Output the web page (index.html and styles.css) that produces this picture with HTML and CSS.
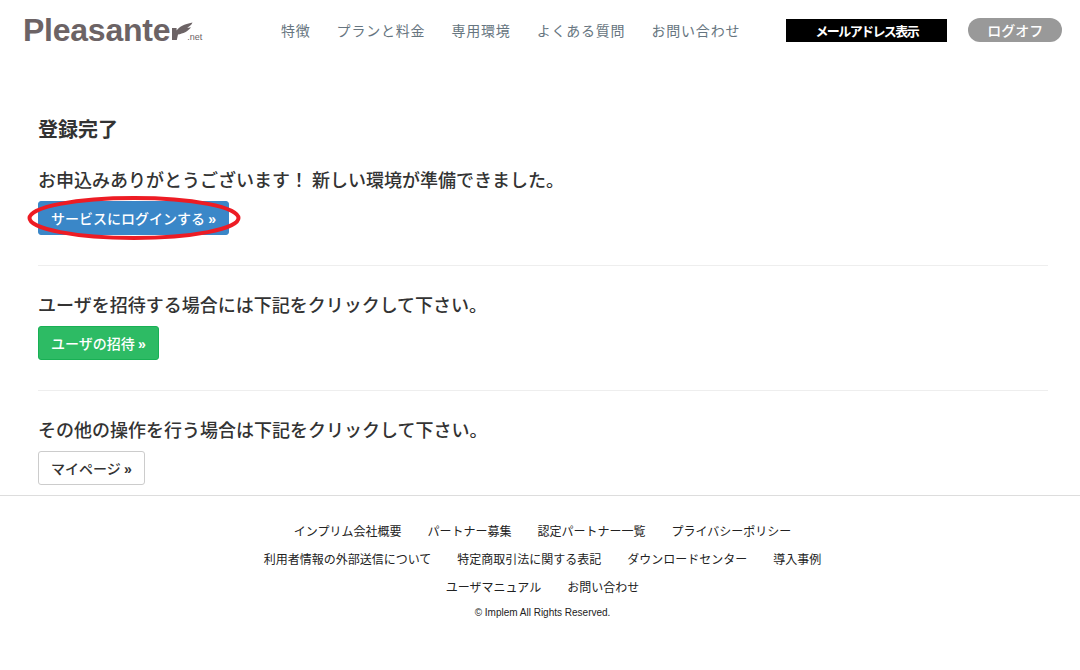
FILE: index.html
```html
<!DOCTYPE html>
<html lang="ja">
<head>
<meta charset="utf-8">
<title>登録完了</title>
<link rel="stylesheet" href="styles.css">
</head>
<body>
<header class="site-header">
  <a class="logo"><span class="logo-name">Pleasante</span><svg class="logo-feather" width="22" height="19" viewBox="0 0 22 19"><path d="M1 18V6h4.600v2.400C8 5 13 2 21.500 .5 20.500 3 18.500 4.500 16 5.600 18 5.800 19 5.600 20 5.200 17 9.500 12 11.500 7 12.500L5.800 18H1Z" fill="#6c6365"/></svg><span class="logo-net">.net</span></a>
  <nav class="nav">
    <a>特徴</a><a>プランと料金</a><a>専用環境</a><a>よくある質問</a><a>お問い合わせ</a>
  </nav>
  <div class="mail">メールアドレス表示</div>
  <div class="logoff">ログオフ</div>
</header>
<main class="content">
  <h1 class="title">登録完了</h1>
  <section class="block">
    <p class="lead">お申込みありがとうございます！ 新しい環境が準備できました。</p>
    <div class="marked">
      <a class="btn btn-blue">サービスにログインする <b class="arrow">»</b></a>
      <svg class="circle" width="214" height="46" viewBox="0 0 214 46"><ellipse cx="107" cy="23" rx="104.500" ry="20" fill="none" stroke="#ed1c24" stroke-width="4"/></svg>
    </div>
  </section>
  <hr class="rule">
  <section class="block">
    <p class="lead">ユーザを招待する場合には下記をクリックして下さい。</p>
    <a class="btn btn-green">ユーザの招待 <b class="arrow">»</b></a>
  </section>
  <hr class="rule">
  <section class="block">
    <p class="lead">その他の操作を行う場合は下記をクリックして下さい。</p>
    <a class="btn btn-white">マイページ <b class="arrow">»</b></a>
  </section>
</main>
<footer class="footer">
  <div class="links"><a>インプリム会社概要</a><a>パートナー募集</a><a>認定パートナー一覧</a><a>プライバシーポリシー</a></div>
  <div class="links"><a>利用者情報の外部送信について</a><a>特定商取引法に関する表記</a><a>ダウンロードセンター</a><a>導入事例</a></div>
  <div class="links"><a>ユーザマニュアル</a><a>お問い合わせ</a></div>
  <p class="copy">© Implem All Rights Reserved.</p>
</footer>
</body>
</html>
```
FILE: styles.css
```css
* { box-sizing: border-box; }
html, body { margin: 0; padding: 0; }
body {
  width: 1080px;
  height: 670px;
  overflow: hidden;
  background: #fff;
  color: #333;
  font-family: "Noto Sans CJK JP", "Liberation Sans", sans-serif;
}
.site-header {
  display: flex;
  align-items: center;
  height: 60px;
  padding: 0 17px 0 23px;
}
.logo {
  display: flex;
  align-items: flex-end;
  width: 181px;
  height: 32px;
  color: #6c6365;
}
.logo-name {
  font: bold 32px/32px "Liberation Sans", sans-serif;
  letter-spacing: -0.25px;
}
.logo-feather { margin: 0 0 5px 1px; }
.logo-net {
  font: 9px/10px "Liberation Sans", sans-serif;
  margin: 0 0 4px -6px;
}
.nav {
  display: flex;
  gap: 26px;
  margin-left: 77px;
  font-size: 14px;
  letter-spacing: 0.8px;
  color: #667580;
}
.mail {
  width: 161px;
  height: 23px;
  margin-left: 46px;
  background: #000;
  color: #fff;
  font-size: 13px;
  font-weight: 700;
  line-height: 23px;
  letter-spacing: -1.6px;
  text-align: center;
}
.logoff {
  width: 94px;
  height: 24px;
  margin-left: 21px;
  border-radius: 12px;
  background: #999;
  color: #fff;
  font-size: 14px;
  font-weight: 500;
  line-height: 24px;
  text-align: center;
}
.content { padding: 55px 32px 0 38px; }
.title {
  margin: 0 0 22px;
  font-size: 20px;
  font-weight: 700;
  line-height: 28px;
}
.lead {
  margin: 0 0 8px;
  font-size: 18px;
  font-weight: 500;
  line-height: 28px;
}
.rule {
  margin: 30px 0 24px;
  border: 0;
  border-top: 1px solid #eee;
}
.marked { position: relative; width: 191px; }
.circle { position: absolute; left: -11px; top: -6px; }
.btn {
  display: inline-block;
  height: 34px;
  padding: 0 12px;
  border: 1px solid transparent;
  border-radius: 3px;
  font-size: 14px;
  font-weight: 500;
  line-height: 32px;
  vertical-align: top;
}
.arrow { font-family: "Liberation Sans", sans-serif; font-weight: 700; }
.btn-blue { background: #3a87c8; border-color: #3a87c8; color: #fff; }
.btn-green { background: #2dbb64; border-color: #18b054; color: #fff; }
.btn-white { background: #fff; border-color: #ccc; color: #333; }
.footer {
  margin-top: 10px;
  padding: 21px 0 0 5px;
  border-top: 1px solid #ddd;
  font-size: 12px;
  color: #222;
  text-align: center;
}
.links {
  display: flex;
  justify-content: center;
  gap: 26px;
  height: 28px;
  line-height: 28px;
}
.copy {
  margin: 5px 0 0;
  font: 10px/14px "Liberation Sans", sans-serif;
}
```
